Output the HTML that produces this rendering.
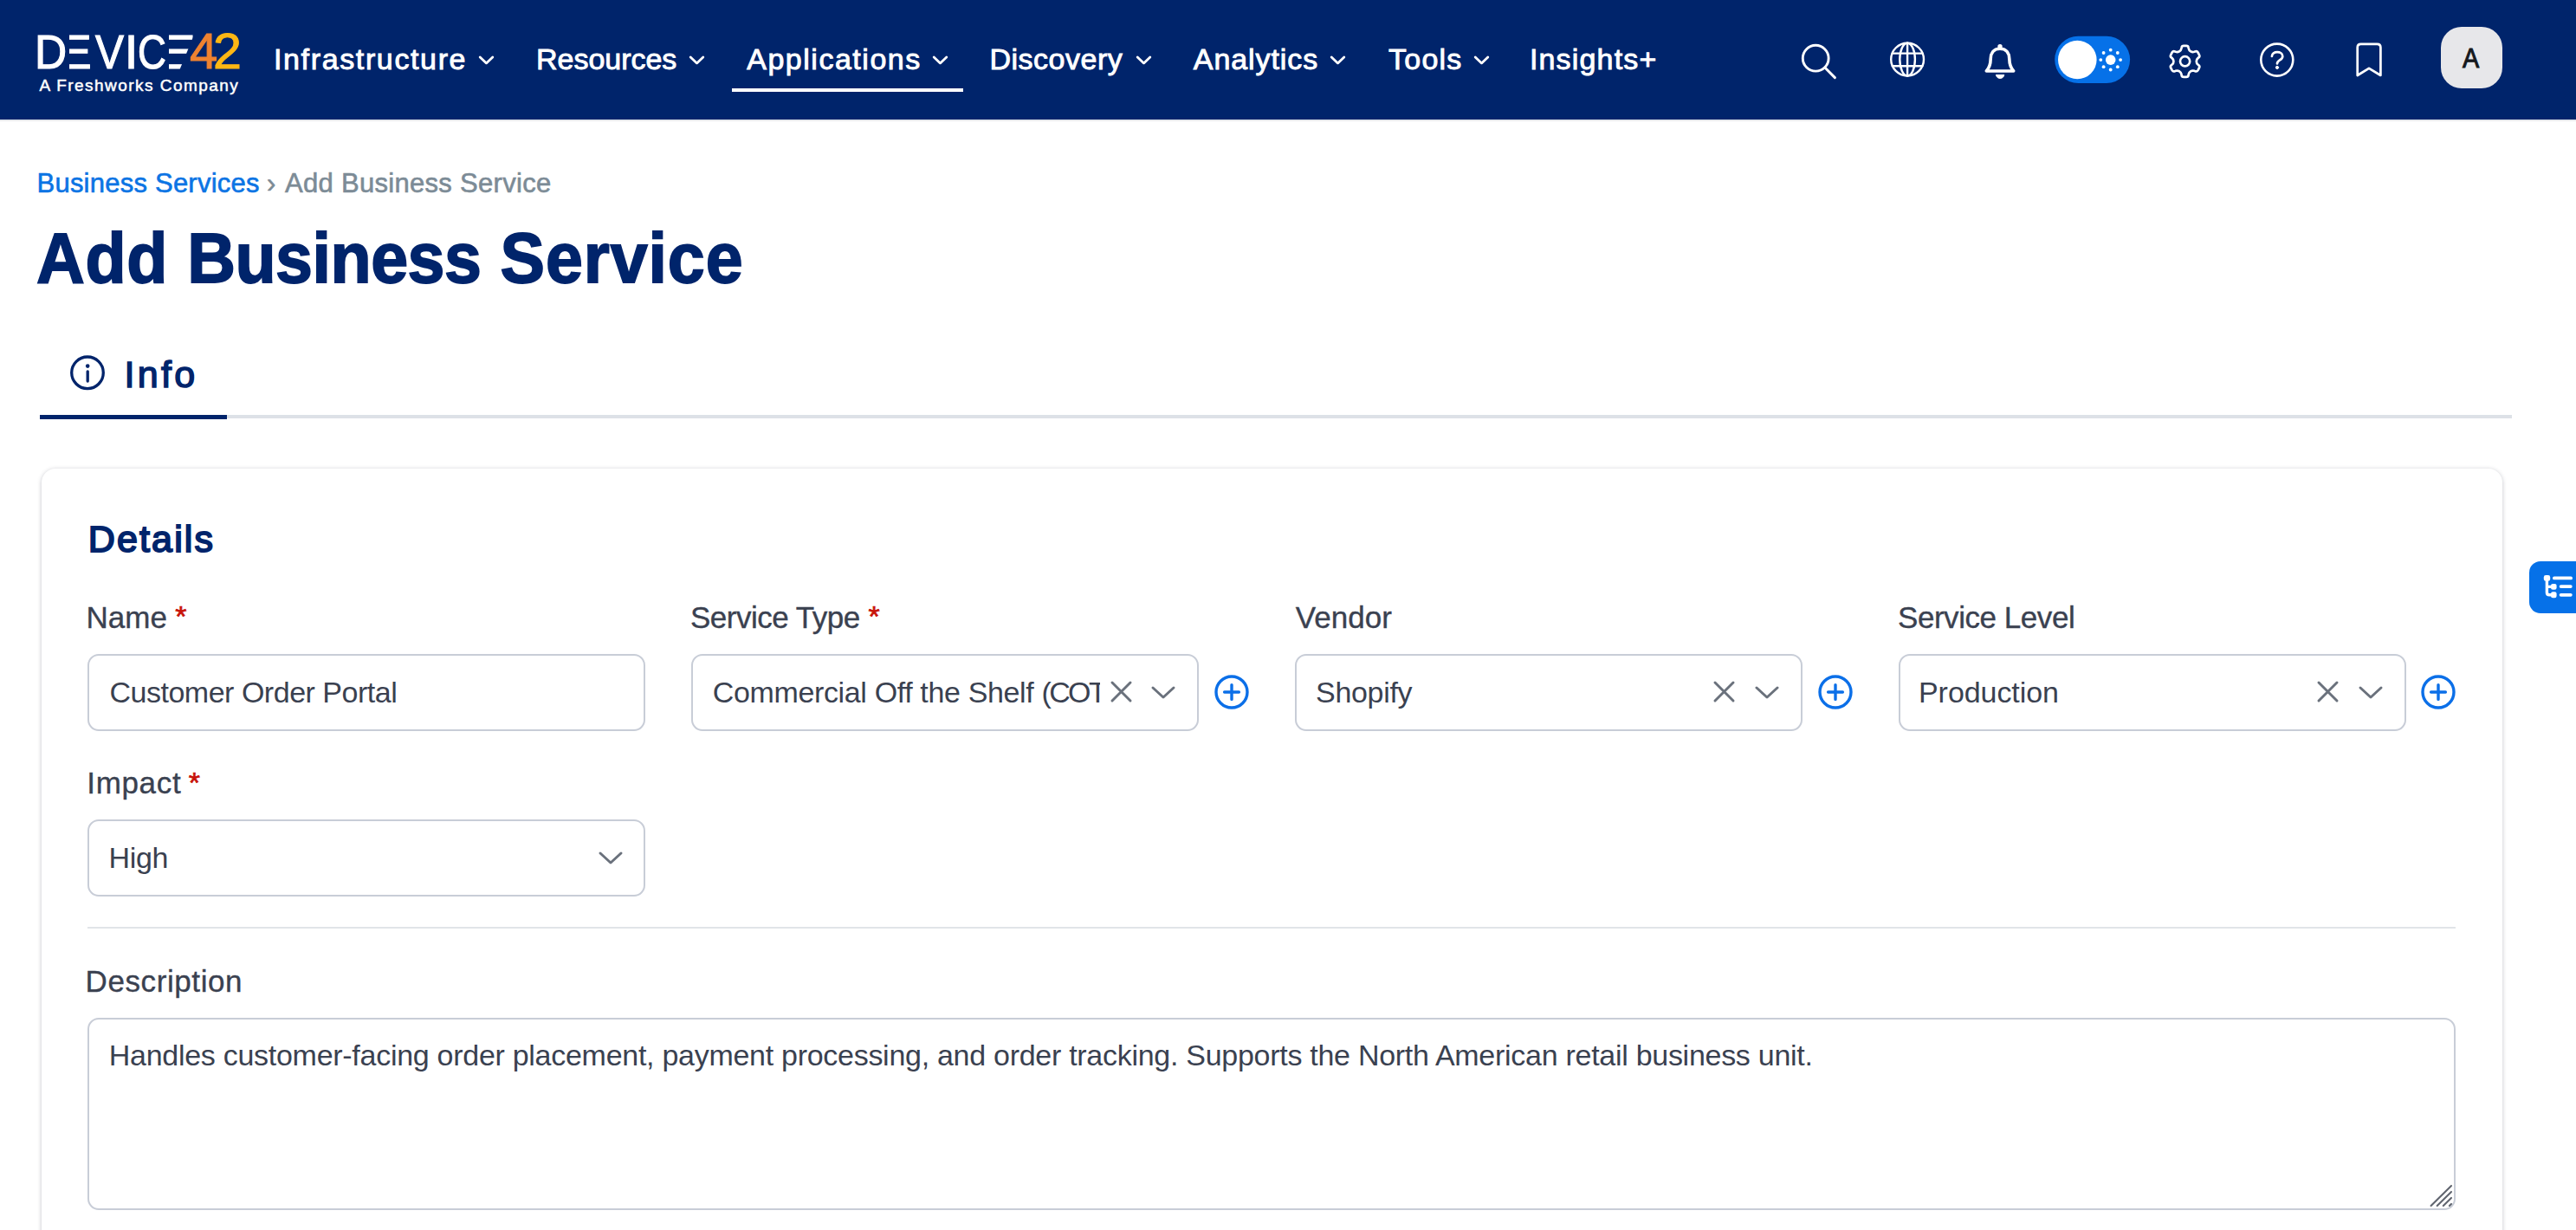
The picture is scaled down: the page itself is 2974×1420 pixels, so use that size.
<!DOCTYPE html>
<html lang="en">
<head>
<meta charset="utf-8">
<title>Add Business Service | Device42</title>
<style>
*{box-sizing:border-box;margin:0;padding:0}
html,body{width:2974px;height:1420px;overflow:hidden;background:#fff}
body{font-family:"Liberation Sans",sans-serif;color:#3a4150;position:relative}
.abs{position:absolute;white-space:pre;line-height:1}
/* ---------- top navigation ---------- */
.nav{position:absolute;left:0;top:0;width:2974px;height:138px;background:#00246b;box-shadow:0 2px 0 #e6e8ec}
.nav .item{position:absolute;top:50.5px;font-size:34px;line-height:1;color:#fff;white-space:pre;-webkit-text-stroke:.9px #fff}
.nav svg.chev{position:absolute;top:65px;width:17px;height:9px;overflow:visible}
.nav .ul{position:absolute;left:845px;top:102px;width:267px;height:4px;background:#fff}
.logo{position:absolute;left:44px;top:0;color:#fff}
.ico{position:absolute;overflow:visible;fill:none;stroke:#fff;stroke-width:3.4;stroke-linecap:round;stroke-linejoin:round}
/* ---------- page heading ---------- */
.crumb{top:196px;left:44px;font-size:31px;-webkit-text-stroke:.6px}
.crumb a{color:#0b74e4;text-decoration:none}
.crumb span{color:#7c8b96}
h1{position:absolute;line-height:1;font-weight:700;color:#00246b;white-space:pre;-webkit-text-stroke:1.8px #00246b}
.tabline{position:absolute;left:46px;top:479px;width:2854px;height:4px;background:#dde1e7}
.tabact{position:absolute;left:46px;top:479px;width:216px;height:5px;background:#00246b}
.tab{color:#00246b;-webkit-text-stroke:1.5px #00246b}
/* ---------- card ---------- */
.card{position:absolute;left:48px;top:541px;width:2841px;height:920px;background:#fff;border-radius:16px;box-shadow:0 1px 5px rgba(20,25,45,.26)}
.h2{font-weight:400;color:#00246b;-webkit-text-stroke:1.9px #00246b}
.lbl{font-size:36px;color:#3a4150;-webkit-text-stroke:.35px #3a4150}
.star{font-size:34px;color:#c8140a;-webkit-text-stroke:.7px #c8140a}
.box{position:absolute;border:2px solid #c8cdd7;border-radius:13px;background:#fff}
.val{font-size:34px;color:#3a4150}
.hr{position:absolute;left:101px;top:1070px;width:2734px;height:2px;background:#e1e4e8}
.gico{position:absolute;overflow:visible;fill:none;stroke:#6a717c;stroke-width:3;stroke-linecap:round;stroke-linejoin:round}
.plus{position:absolute;overflow:visible;fill:none;stroke:#0b6fe8;stroke-width:3.4;stroke-linecap:round}
.side{position:absolute;left:2920px;top:648px;width:60px;height:60px;background:#0671e8;border-radius:13px 0 0 13px}
</style>
</head>
<body>

<!-- NAV -->
<div class="nav" id="nav">
<div class="logo">
 <div class="abs" id="lg1" style="left:-44px;top:31.6px;width:240px;height:60px;font-size:56px;-webkit-text-stroke:1.2px #fff"><span style="position:absolute;left:39.7px;top:0;z-index:3;transform-origin:0 0;transform:scaleX(0.919)">D</span><span style="position:absolute;left:69.6px;top:0;z-index:1;transform-origin:0 0;transform:scaleX(0.955)">E</span><i style="position:absolute;z-index:2;left:72.5px;top:4px;width:7.4px;height:50px;background:#00246b"></i><span style="position:absolute;left:109.7px;top:0;z-index:3;transform-origin:0 0;transform:scaleX(0.883)">V</span><span style="position:absolute;left:143.8px;top:0;z-index:3;transform-origin:0 0;transform:scaleX(1.000)">I</span><span style="position:absolute;left:159.2px;top:0;z-index:3;transform-origin:0 0;transform:scaleX(0.814)">C</span><span style="position:absolute;left:183.2px;top:0;z-index:1;transform-origin:0 0;transform:scaleX(1.147)">E</span><i style="position:absolute;z-index:2;left:186.5px;top:4px;width:8.9px;height:50px;background:#00246b"></i><i style="position:absolute;z-index:2;left:225.2px;top:6.5px;width:21px;height:46px;background:#00246b;transform-origin:0 0;transform:skewX(-22.5deg)"></i></div>
 <div class="abs" id="lg2" style="z-index:5;left:-44px;top:31px;width:300px;height:60px;font-size:57px;-webkit-text-stroke:1px"><span style="position:absolute;left:219.2px;top:0;transform-origin:0 0;transform:scaleX(1.020);color:#ee8230;-webkit-text-stroke-color:#ee8230">4</span><span style="position:absolute;left:246.2px;top:0;transform-origin:0 0;transform:scaleX(1.040);color:#fdb714;-webkit-text-stroke-color:#fdb714">2</span></div>
 <div class="abs" id="lg3" style="left:1.4px;top:89.2px;font-size:19px;letter-spacing:1.46px;-webkit-text-stroke:.5px #fff">A Freshworks Company</div>
</div>
<div id="n1" class="item" style="left:316.0px;letter-spacing:1.63px">Infrastructure</div>
<svg class="chev" style="left:552.5px" viewBox="0 0 17 9"><path d="M1.2 1 L8.5 7.9 L15.8 1" fill="none" stroke="#fff" stroke-width="2.8" stroke-linecap="round" stroke-linejoin="round"/></svg>
<div id="n2" class="item" style="left:619.0px;letter-spacing:-0.02px">Resources</div>
<svg class="chev" style="left:796.2px" viewBox="0 0 17 9"><path d="M1.2 1 L8.5 7.9 L15.8 1" fill="none" stroke="#fff" stroke-width="2.8" stroke-linecap="round" stroke-linejoin="round"/></svg>
<div id="n3" class="item" style="left:862.2px;letter-spacing:1.52px">Applications</div>
<svg class="chev" style="left:1077.2px" viewBox="0 0 17 9"><path d="M1.2 1 L8.5 7.9 L15.8 1" fill="none" stroke="#fff" stroke-width="2.8" stroke-linecap="round" stroke-linejoin="round"/></svg>
<div id="n4" class="item" style="left:1142.4px;letter-spacing:0.51px">Discovery</div>
<svg class="chev" style="left:1311.7px" viewBox="0 0 17 9"><path d="M1.2 1 L8.5 7.9 L15.8 1" fill="none" stroke="#fff" stroke-width="2.8" stroke-linecap="round" stroke-linejoin="round"/></svg>
<div id="n5" class="item" style="left:1377.8px;letter-spacing:0.92px">Analytics</div>
<svg class="chev" style="left:1536.2px" viewBox="0 0 17 9"><path d="M1.2 1 L8.5 7.9 L15.8 1" fill="none" stroke="#fff" stroke-width="2.8" stroke-linecap="round" stroke-linejoin="round"/></svg>
<div id="n6" class="item" style="left:1603.0px;letter-spacing:1.25px">Tools</div>
<svg class="chev" style="left:1701.9px" viewBox="0 0 17 9"><path d="M1.2 1 L8.5 7.9 L15.8 1" fill="none" stroke="#fff" stroke-width="2.8" stroke-linecap="round" stroke-linejoin="round"/></svg>
<div id="n7" class="item" style="left:1765.9px;letter-spacing:1.18px">Insights+</div>
<div class="ul"></div>
<svg class="ico" style="left:2076px;top:47px" width="48" height="48" viewBox="2076 47 48 48"><circle cx="2096.2" cy="67.2" r="14.9" stroke-width="2.9"/><path d="M2106.9 78 L2118.4 89.6" stroke-width="3"/></svg>
<svg class="ico" style="left:2178px;top:44px;stroke-width:2.4" width="48" height="48" viewBox="2178 44 48 48"><circle cx="2202.1" cy="68.6" r="18.9"/><ellipse cx="2202.1" cy="68.6" rx="8.8" ry="18.9"/><path d="M2202.1 49.8 V87.4 M2184.8 61.6 H2219.4 M2184.8 76.3 H2219.4"/></svg>
<svg class="ico" style="left:2286px;top:46px;stroke-width:3.6" width="48" height="50" viewBox="2286 46 48 50"><path d="M2309 56.3 C2301 56.3 2298.3 62 2298.2 68 C2298.1 75 2295.6 79.5 2293.3 82 H2324.7 C2322.4 79.5 2319.9 75 2319.8 68 C2319.7 62 2317 56.3 2309 56.3 Z"/><circle cx="2309" cy="53.6" r="1.9" fill="#fff" stroke-width="1.6"/><path d="M2304.5 86.7 A4.7 4.7 0 0 0 2313.7 86.7 Z" fill="#fff" stroke-width="1"/></svg>
<svg style="position:absolute;left:2372px;top:41px;overflow:visible" width="88" height="56" viewBox="2372 41 88 56"><rect x="2372.2" y="41.7" width="86.9" height="54.3" rx="27.15" fill="#0671e8"/><circle cx="2398.3" cy="69" r="22.3" fill="#fff"/><g fill="#fff"><circle cx="2436.7" cy="69.1" r="5.8"/><circle cx="2448.1" cy="69.1" r="1.9"/><circle cx="2444.8" cy="77.2" r="1.9"/><circle cx="2436.7" cy="80.5" r="1.9"/><circle cx="2428.6" cy="77.2" r="1.9"/><circle cx="2425.3" cy="69.1" r="1.9"/><circle cx="2428.6" cy="61.0" r="1.9"/><circle cx="2436.7" cy="57.7" r="1.9"/><circle cx="2444.8" cy="61.0" r="1.9"/></g></svg>
<svg class="ico" style="left:2498px;top:46px;stroke-width:2.7" width="50" height="50" viewBox="2498 46 50 50"><path d="M2516.1 59.3 Q2518.0 58.2 2518.4 56.0 L2518.6 54.9 Q2518.9 52.8 2521.1 52.8 L2524.1 52.8 Q2526.3 52.8 2526.6 54.9 L2526.8 56.0 Q2527.2 58.2 2529.1 59.3 L2529.3 59.4 Q2531.2 60.5 2533.3 59.8 L2534.3 59.4 Q2536.4 58.6 2537.5 60.5 L2538.9 63.1 Q2540.0 65.0 2538.4 66.4 L2537.5 67.1 Q2535.8 68.5 2535.8 70.7 L2535.8 70.9 Q2535.8 73.1 2537.5 74.5 L2538.4 75.2 Q2540.0 76.6 2538.9 78.5 L2537.5 81.1 Q2536.4 83.0 2534.3 82.2 L2533.3 81.8 Q2531.2 81.1 2529.3 82.2 L2529.1 82.3 Q2527.2 83.4 2526.8 85.6 L2526.6 86.7 Q2526.3 88.8 2524.1 88.8 L2521.1 88.8 Q2518.9 88.8 2518.6 86.7 L2518.4 85.6 Q2518.0 83.4 2516.1 82.3 L2515.9 82.2 Q2514.0 81.1 2511.9 81.8 L2510.9 82.2 Q2508.8 83.0 2507.7 81.1 L2506.3 78.5 Q2505.2 76.6 2506.8 75.2 L2507.7 74.5 Q2509.4 73.1 2509.4 70.9 L2509.4 70.7 Q2509.4 68.5 2507.7 67.1 L2506.8 66.4 Q2505.2 65.0 2506.3 63.1 L2507.7 60.5 Q2508.8 58.6 2510.9 59.4 L2511.9 59.8 Q2514.0 60.5 2515.9 59.4 Z"/><circle cx="2522.6" cy="70.8" r="5.6"/></svg>
<svg class="ico" style="left:2604px;top:45px;stroke-width:2.6" width="50" height="50" viewBox="2604 45 50 50"><circle cx="2628.8" cy="69.1" r="18.5"/><path d="M2622.9 65 C2622.9 58.5 2635.3 58.7 2635.3 64.9 C2635.3 69.6 2629 69.3 2629 73.4" stroke-width="2.7"/><circle cx="2629" cy="77.9" r="1.6" fill="#fff" stroke-width="1"/></svg>
<svg class="ico" style="left:2716px;top:45px;stroke-width:2.7" width="40" height="50" viewBox="2716 45 40 50"><path d="M2721.7 87 V54.8 Q2721.7 50.8 2725.7 50.8 H2744.4 Q2748.4 50.8 2748.4 54.8 V87 L2735 78.8 Z"/></svg>
<div style="position:absolute;left:2818px;top:31px;width:71px;height:70.5px;border-radius:24px;background:#e7e7ea"></div>
<div class="abs" id="avA" style="left:2842.8px;top:51.4px;transform-origin:0 0;transform:scaleX(.9);font-size:32px;color:#15181d;-webkit-text-stroke:1px #15181d">A</div>
</div>

<!-- HEADING -->
<div id="c1" class="abs crumb" style="left:42.5px;letter-spacing:0.23px"><a>Business Services</a></div><div id="c2" class="abs crumb" style="left:308px"><span>›</span></div><div id="c3" class="abs crumb" style="left:329.0px;letter-spacing:0.30px"><span>Add Business Service</span></div>
<h1 id="h1" style="left:42.0px;top:257.4px;font-size:82px;letter-spacing:0.72px;transform-origin:0 0;transform:scaleX(.941)">Add <span style="letter-spacing:-.5px">Business</span> <span style="letter-spacing:.95px">Service</span></h1>
<div class="tabline"></div><div class="tabact"></div>
<svg style="position:absolute;left:80px;top:409px;overflow:visible" width="42" height="42" viewBox="80 409 42 42"><circle cx="101" cy="430.3" r="18.3" fill="none" stroke="#00246b" stroke-width="3.3"/><circle cx="101.2" cy="422.6" r="2.3" fill="#00246b"/><path d="M101.2 428.8 V440" stroke="#00246b" stroke-width="3.3" stroke-linecap="round"/></svg>
<div id="tab" class="abs tab" style="left:143.4px;top:411.4px;font-size:43px;letter-spacing:3.38px">Info</div>

<!-- CARD -->
<div class="card"></div>
<div id="h2" class="abs h2" style="left:101.7px;top:601.3px;font-size:43px;letter-spacing:2.16px">Details</div>
<div id="l1" class="abs lbl" style="left:99.5px;top:695.1px;font-size:35px;letter-spacing:-0.00px">Name</div>
<div class="box" style="left:101px;top:755px;width:644px;height:89px"></div>
<div id="v1" class="abs val" style="left:126.4px;top:781.7px;letter-spacing:-0.48px">Customer Order Portal</div>
<div id="l2" class="abs lbl" style="left:797.0px;top:695.1px;font-size:35px;letter-spacing:-0.50px">Service Type</div>
<div class="box" style="left:798px;top:755px;width:586px;height:89px"></div>
<div id="v2" class="abs val" style="left:822.8px;top:781.7px;letter-spacing:-0.36px;width:447.6px;overflow:hidden;height:42px">Commercial Off the Shelf <span style="letter-spacing:-2.6px">(COTS)</span></div>
<svg class="gico" style="left:1282.5px;top:786.9px" width="23" height="23" viewBox="0 0 23 23"><path d="M1 1 L22 22 M22 1 L1 22"/></svg>
<svg class="gico" style="left:1329.5px;top:792.8px" width="26" height="13" viewBox="0 0 26 13"><path d="M1 1 L13 12 L25 1"/></svg>
<svg class="plus" style="left:1401.7px;top:779.2px" width="40" height="40" viewBox="0 0 40 40"><circle cx="20" cy="20" r="18"/><path d="M11.6 20 H28.4 M20 11.6 V28.4"/></svg>
<div id="l3" class="abs lbl" style="left:1495.7px;top:695.1px;font-size:35px;letter-spacing:0.06px">Vendor</div>
<div class="box" style="left:1495px;top:755px;width:586px;height:89px"></div>
<div id="v3" class="abs val" style="left:1519.0px;top:781.7px;letter-spacing:-0.30px">Shopify</div>
<svg class="gico" style="left:1978.5px;top:786.9px" width="23" height="23" viewBox="0 0 23 23"><path d="M1 1 L22 22 M22 1 L1 22"/></svg>
<svg class="gico" style="left:2027.0px;top:792.8px" width="26" height="13" viewBox="0 0 26 13"><path d="M1 1 L13 12 L25 1"/></svg>
<svg class="plus" style="left:2098.5px;top:779.2px" width="40" height="40" viewBox="0 0 40 40"><circle cx="20" cy="20" r="18"/><path d="M11.6 20 H28.4 M20 11.6 V28.4"/></svg>
<div id="l4" class="abs lbl" style="left:2191.0px;top:695.1px;font-size:35px;letter-spacing:-0.45px">Service Level</div>
<div class="box" style="left:2192px;top:755px;width:586px;height:89px"></div>
<div id="v4" class="abs val" style="left:2215.0px;top:781.7px;letter-spacing:-0.06px">Production</div>
<svg class="gico" style="left:2676.2px;top:786.9px" width="23" height="23" viewBox="0 0 23 23"><path d="M1 1 L22 22 M22 1 L1 22"/></svg>
<svg class="gico" style="left:2723.7px;top:792.8px" width="26" height="13" viewBox="0 0 26 13"><path d="M1 1 L13 12 L25 1"/></svg>
<svg class="plus" style="left:2795.1px;top:779.2px" width="40" height="40" viewBox="0 0 40 40"><circle cx="20" cy="20" r="18"/><path d="M11.6 20 H28.4 M20 11.6 V28.4"/></svg>
<div id="l5" class="abs lbl" style="left:100.3px;top:886.2px;font-size:35px;letter-spacing:0.66px">Impact</div>
<div class="box" style="left:101px;top:946px;width:644px;height:89px"></div>
<div id="v5" class="abs val" style="left:125.6px;top:972.6px;letter-spacing:-0.36px">High</div>
<svg class="gico" style="left:692.3px;top:984.3px" width="26" height="13" viewBox="0 0 26 13"><path d="M1 1 L13 12 L25 1"/></svg>
<div class="abs star" style="left:202.2px;top:693.5px">*</div>
<div class="abs star" style="left:1002.6px;top:693.5px">*</div>
<div class="abs star" style="left:217.8px;top:886.3px">*</div>
<div class="hr"></div>
<div id="l6" class="abs lbl" style="left:98.5px;top:1115.2px;font-size:35px;letter-spacing:0.60px">Description</div>
<div class="box" style="left:101px;top:1175px;width:2734px;height:222px"></div>
<div id="v6" class="abs val" style="left:125.8px;top:1200.9px;letter-spacing:-0.28px">Handles customer-facing order placement, payment processing, and order tracking. Supports the North American retail business unit.</div>
<svg style="position:absolute;left:2800px;top:1362px;overflow:visible" width="36" height="36" viewBox="2800 1362 36 36" fill="none" stroke="#60656f" stroke-width="2.1" stroke-linecap="round"><path d="M2806.6 1392 L2830 1368.9 M2813.7 1392 L2830 1375.9 M2820.8 1392 L2830 1382.9 M2827.9 1392 L2830 1389.9"/></svg>

<div class="side"><svg style="position:absolute;left:0;top:0;overflow:visible" width="60" height="60" viewBox="2920 648 60 60" fill="#fff"><rect x="2936.8" y="664" width="7.4" height="6.8" rx="2.4"/><rect x="2945" y="673.9" width="6.6" height="6.9" rx="2.2"/><rect x="2945" y="683.3" width="6.6" height="6.9" rx="2.2"/><path d="M2940.4 669 V684 Q2940.4 686.8 2943.2 686.8 H2946 M2940.4 677.4 H2946" fill="none" stroke="#fff" stroke-width="3.4"/><rect x="2947" y="665.6" width="23" height="3.7" rx="1.85"/><rect x="2954.7" y="675.2" width="15" height="3.8" rx="1.9"/><rect x="2954.7" y="684.9" width="15" height="3.8" rx="1.9"/></svg></div>
</body>
</html>
